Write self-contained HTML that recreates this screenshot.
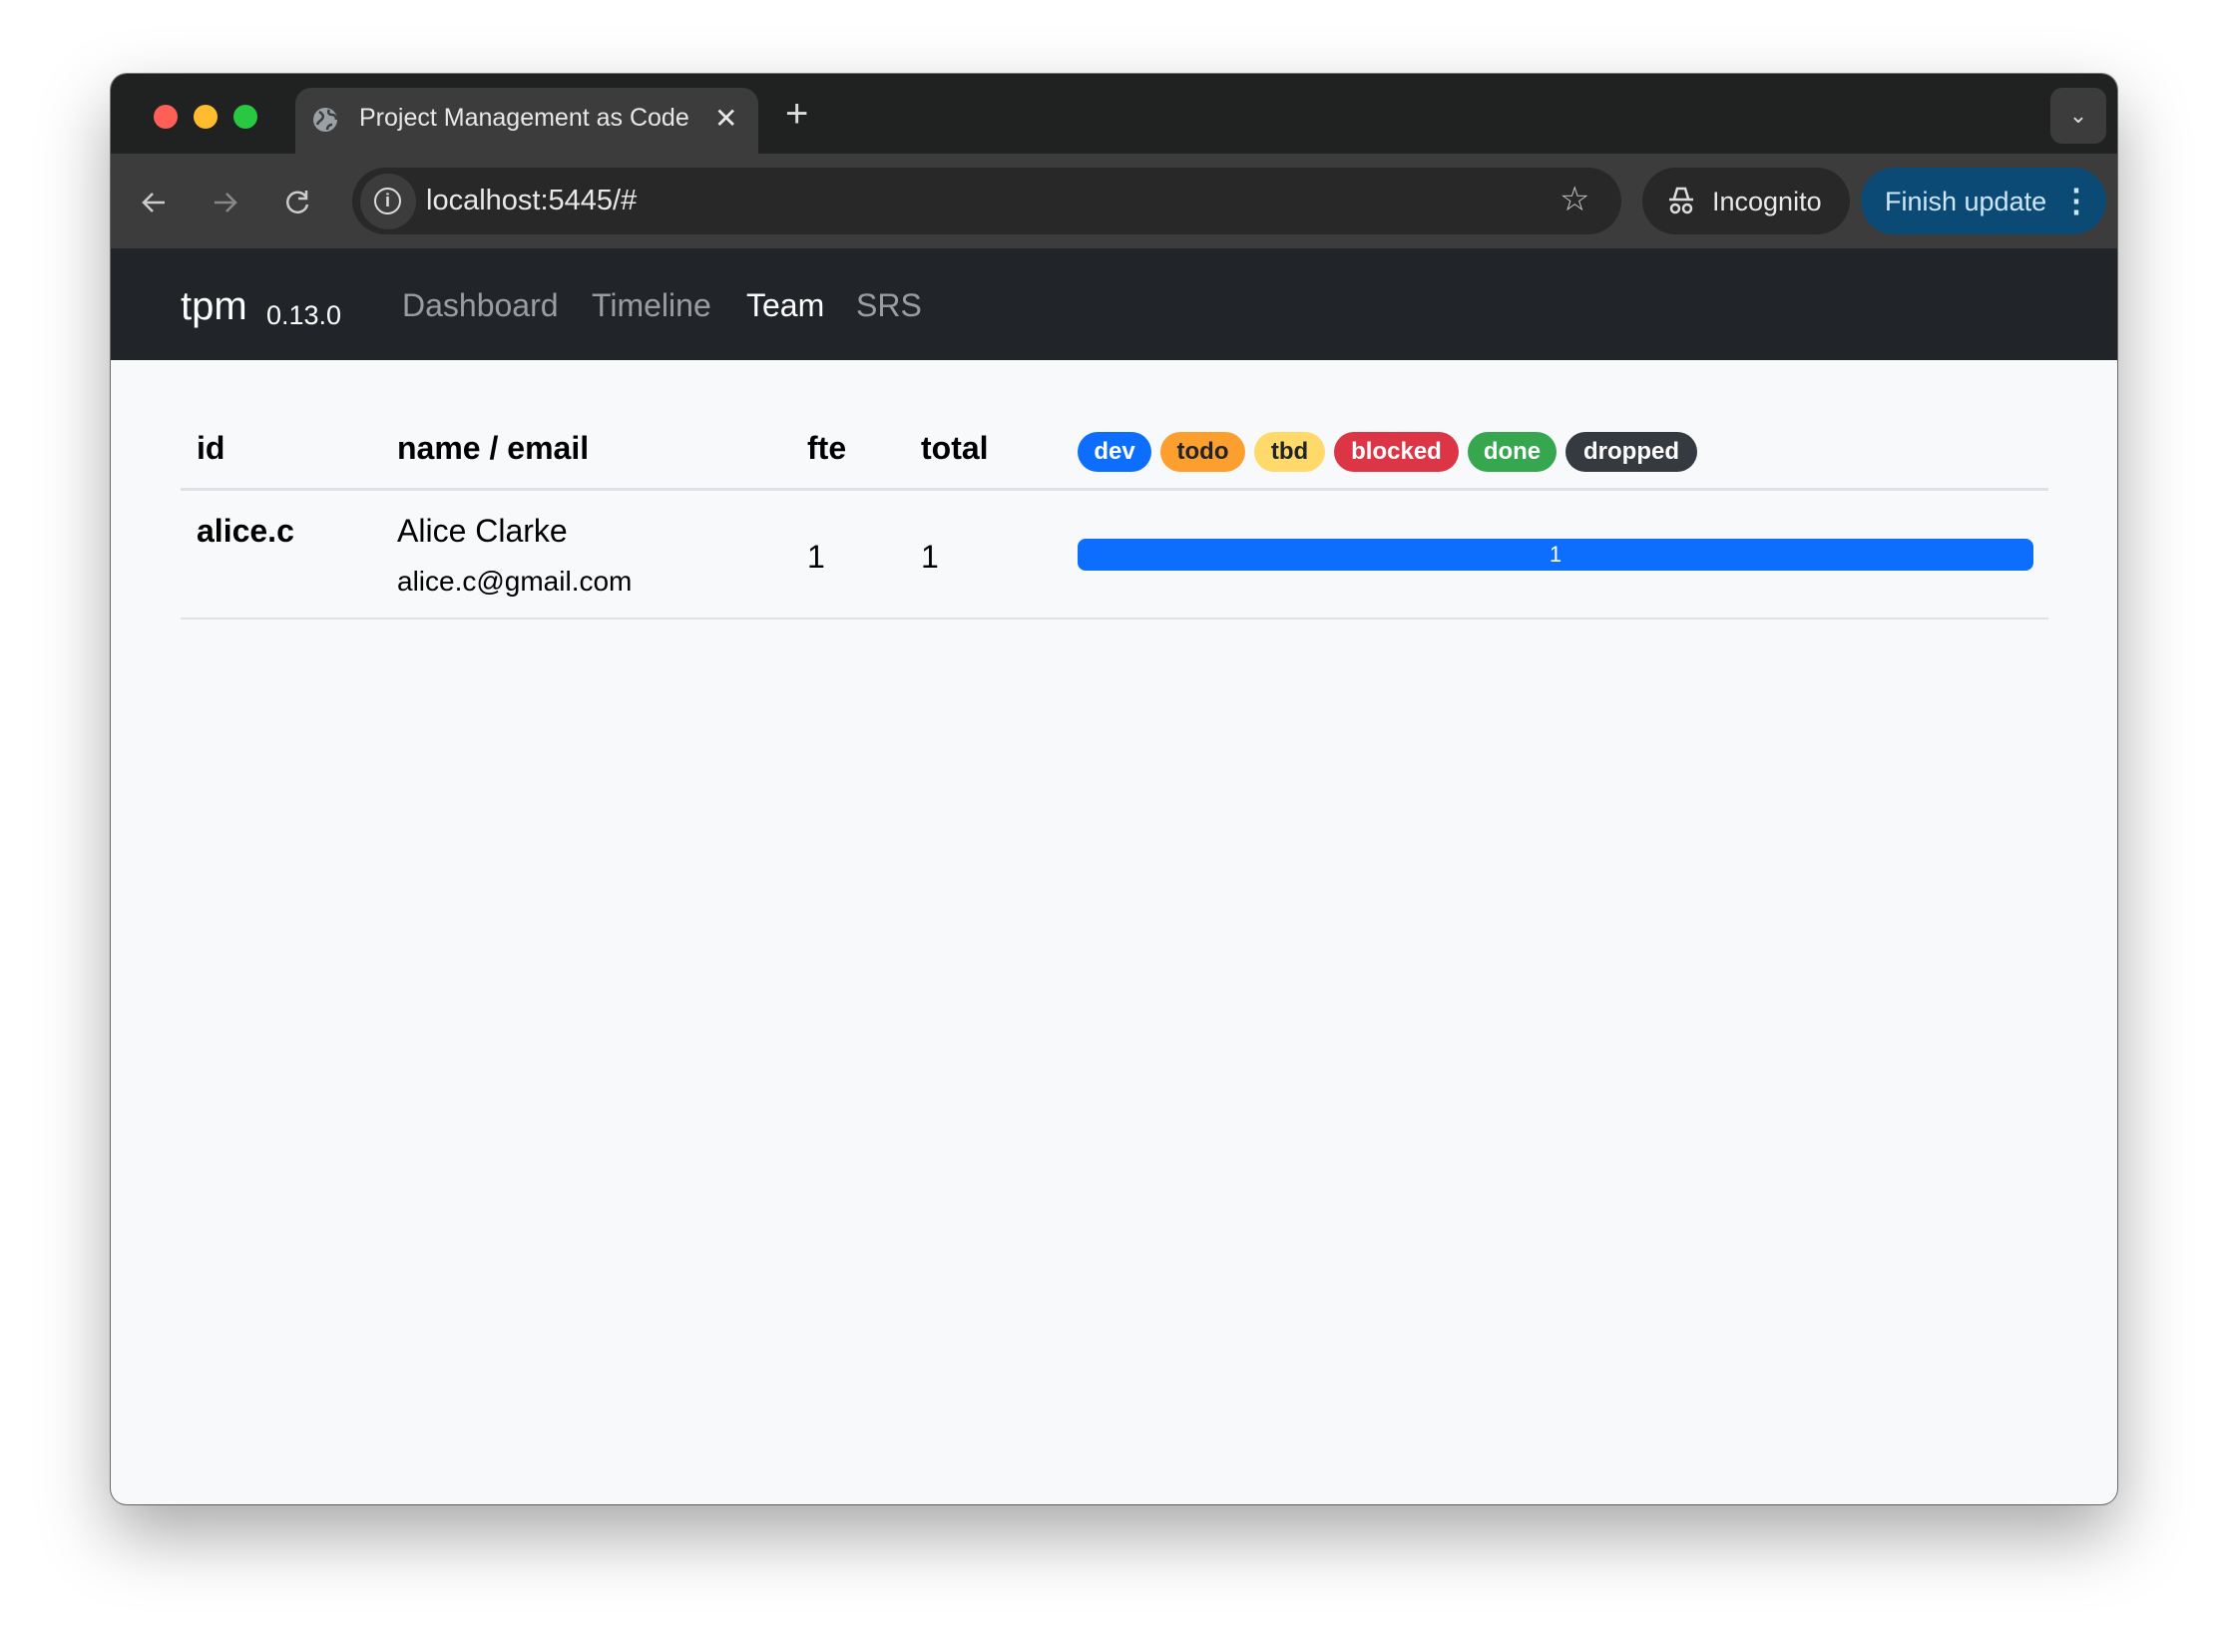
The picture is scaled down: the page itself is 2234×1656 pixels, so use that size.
<!DOCTYPE html>
<html><head><meta charset="utf-8"><style>
*{box-sizing:border-box;margin:0;padding:0}
body{width:2234px;height:1656px;background:#fff;font-family:"Liberation Sans",sans-serif;position:relative;overflow:hidden}
.win{position:absolute;left:111px;top:74px;width:2011px;height:1434px;border-radius:16px;overflow:hidden;background:#f8f9fa;box-shadow:0 30px 70px rgba(0,0,0,.35),0 0 0 1px rgba(0,0,0,.5)}
.tabs{position:absolute;left:0;top:0;width:100%;height:80px;background:#202221}
.dot{position:absolute;top:31px;width:24px;height:24px;border-radius:50%}
.tab{position:absolute;left:185px;top:14px;width:464px;height:66px;background:#3c3c3c;border-radius:16px 16px 0 0;color:#e8e8e8;font-size:25px}
.tool{position:absolute;left:0;top:80px;width:100%;height:95px;background:#3c3c3c}
.omni{position:absolute;left:242px;top:14px;width:1272px;height:67px;background:#282828;border-radius:34px;color:#e8e8e8;font-size:29px}
.pill{position:absolute;top:14px;height:67px;border-radius:34px;font-size:27px}
.nav{position:absolute;left:0;top:175px;width:100%;height:112px;background:#212529}
.nav span{position:absolute;font-size:32px;color:rgba(255,255,255,.55);top:39px}
.th{position:absolute;font-weight:bold;font-size:32px;color:#000;top:357px}
.b{position:absolute;top:359px;height:40px;border-radius:20px;font-weight:bold;font-size:24px;line-height:40px;text-align:center;color:#fff}
.td{position:absolute;font-size:32px;color:#000}
</style></head><body>
<div class="win">
 <div class="tabs">
  <div class="dot" style="left:43px;background:#fe5f57"></div>
  <div class="dot" style="left:83px;background:#febc2e"></div>
  <div class="dot" style="left:123px;background:#28c840"></div>
  <div class="tab">
   <svg style="position:absolute;left:16px;top:18px" width="28" height="28" viewBox="0 0 28 28"><circle cx="14" cy="14" r="12" fill="#9aa0a6"/><path d="M8 6c3 2 5 4 3 7s-4 2-5 6M18 4c-2 3 0 5 3 5s4 3 4 5M16 24c0-3 2-5 5-5" stroke="#3c3c3c" stroke-width="2.5" fill="none"/></svg>
   <span style="position:absolute;left:64px;top:16px">Project Management as Code</span>
   <span style="position:absolute;left:420px;top:14px;font-size:28px">✕</span>
  </div>
  <span style="position:absolute;left:676px;top:18px;color:#ddd;font-size:40px">+</span>
  <div style="position:absolute;left:1944px;top:14px;width:56px;height:56px;background:#3c3c3c;border-radius:12px;color:#ddd;font-size:22px;text-align:center;line-height:56px">⌄</div>
 </div>
 <div class="tool">
  <svg style="position:absolute;left:28px;top:34px" width="30" height="30" viewBox="0 0 30 30"><path d="M26 15H5M14 6l-9 9 9 9" stroke="#ccc" stroke-width="2.5" fill="none"/></svg>
  <svg style="position:absolute;left:100px;top:34px" width="30" height="30" viewBox="0 0 30 30"><path d="M4 15h21M16 6l9 9-9 9" stroke="#888" stroke-width="2.5" fill="none"/></svg>
  <svg style="position:absolute;left:172px;top:34px" width="30" height="30" viewBox="0 0 30 30"><path d="M24 10A10 10 0 1 0 25 17M24 3v8h-8" stroke="#ccc" stroke-width="2.5" fill="none"/></svg>
  <div class="omni">
   <div style="position:absolute;left:8px;top:6px;width:56px;height:56px;border-radius:50%;background:#3c3c3c"></div>
   <div style="position:absolute;left:22px;top:20px;width:27px;height:27px;border:2.5px solid #ddd;border-radius:50%;text-align:center;font-size:18px;font-weight:bold;line-height:22px;color:#ddd">i</div>
   <span style="position:absolute;left:74px;top:17px">localhost:5445/#</span>
   <span style="position:absolute;left:1210px;top:12px;font-size:34px;color:#ccc">☆</span>
  </div>
  <div class="pill" style="left:1535px;width:208px;background:#282828;color:#e8e8e8">
   <svg style="position:absolute;left:24px;top:18px" width="30" height="30" viewBox="0 0 30 30"><path d="M8 13l3-10h8l3 10M3 14h24" stroke="#ddd" stroke-width="2.5" fill="none"/><circle cx="9" cy="23" r="4" stroke="#ddd" stroke-width="2.5" fill="none"/><circle cx="21" cy="23" r="4" stroke="#ddd" stroke-width="2.5" fill="none"/></svg>
   <span style="position:absolute;left:70px;top:19px">Incognito</span></div>
  <div class="pill" style="left:1754px;width:246px;background:#0a4a75;color:#cfe6ff"><span style="position:absolute;left:24px;top:19px">Finish update</span><span style="position:absolute;left:200px;top:14px;font-size:32px;font-weight:bold">⋮</span></div>
 </div>
 <div class="nav">
  <span style="left:70px;top:36px;color:#fff;font-size:40px">tpm</span>
  <span style="left:156px;top:52px;color:#fff;font-size:27px">0.13.0</span>
  <span style="left:292px">Dashboard</span>
  <span style="left:482px">Timeline</span>
  <span style="left:637px;color:#fff">Team</span>
  <span style="left:747px">SRS</span>
 </div>
 <div class="th" style="left:86px">id</div>
 <div class="th" style="left:287px">name / email</div>
 <div class="th" style="left:698px">fte</div>
 <div class="th" style="left:812px">total</div>
 <div class="b" style="left:969px;width:74px;background:#0d6efd">dev</div>
 <div class="b" style="left:1052px;width:85px;background:#fd9f2e;color:#212529">todo</div>
 <div class="b" style="left:1146px;width:71px;background:#ffda6a;color:#212529">tbd</div>
 <div class="b" style="left:1226px;width:125px;background:#dc3545">blocked</div>
 <div class="b" style="left:1360px;width:89px;background:#36a64f">done</div>
 <div class="b" style="left:1458px;width:132px;background:#343a40">dropped</div>
 <div style="position:absolute;left:70px;top:415px;width:1872px;height:3px;background:#dee2e6"></div>
 <div class="td" style="left:86px;top:440px;font-weight:bold">alice.c</div>
 <div class="td" style="left:287px;top:440px">Alice Clarke</div>
 <div class="td" style="left:287px;top:493px;font-size:28px">alice.c@gmail.com</div>
 <div class="td" style="left:698px;top:466px">1</div>
 <div class="td" style="left:812px;top:466px">1</div>
 <div style="position:absolute;left:969px;top:466px;width:958px;height:32px;background:#0d6efd;border-radius:8px;color:#fff;font-size:22px;text-align:center;line-height:32px">1</div>
 <div style="position:absolute;left:70px;top:545px;width:1872px;height:2px;background:#dee2e6"></div>
</div>
</body></html>
